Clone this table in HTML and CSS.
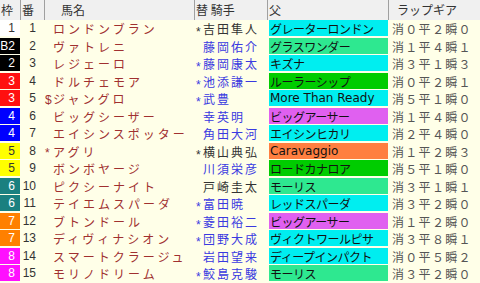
FILE: index.html
```html
<!DOCTYPE html>
<html lang="ja">
<head>
<meta charset="utf-8">
<link rel="stylesheet" href="styles.css">
</head>
<body>
<div class="board">
  <div class="hdr">
    <div class="h">枠</div>
    <div class="h">番</div>
    <div class="h h-name">馬名</div>
    <div class="h">替 騎手</div>
    <div class="h">父</div>
    <div class="h h-lap">ラップギア</div>
  </div>

  <div class="row"><div class="waku w1">1</div><div class="ban">1</div><div class="name"><span class="mk"></span>ロンドンブラン</div><div class="jockey k-black"><span class="ast">*</span>吉田隼人</div><div class="sire s-cyan">グレーターロンドン</div><div class="lap">消０平２瞬０</div></div>
  <div class="row"><div class="waku w2">B2</div><div class="ban">2</div><div class="name"><span class="mk"></span>ヴァトレニ</div><div class="jockey"><span class="ast"></span>藤岡佑介</div><div class="sire s-spring">グラスワンダー</div><div class="lap">消１平４瞬１</div></div>
  <div class="row"><div class="waku w2">2</div><div class="ban">3</div><div class="name"><span class="mk"></span>レジェーロ</div><div class="jockey"><span class="ast">*</span>藤岡康太</div><div class="sire s-cyan">キズナ</div><div class="lap">消３平１瞬３</div></div>
  <div class="row"><div class="waku w3">3</div><div class="ban">4</div><div class="name"><span class="mk"></span>ドルチェモア</div><div class="jockey"><span class="ast">*</span>池添謙一</div><div class="sire s-green">ルーラーシップ</div><div class="lap">消０平２瞬１</div></div>
  <div class="row"><div class="waku w3">3</div><div class="ban">5</div><div class="name"><span class="mk">$</span>ジャングロ</div><div class="jockey"><span class="ast">*</span>武豊</div><div class="sire s-cyan latin">More Than Ready</div><div class="lap">消５平１瞬０</div></div>
  <div class="row"><div class="waku w4">4</div><div class="ban">6</div><div class="name"><span class="mk"></span>ビッグシーザー</div><div class="jockey"><span class="ast"></span>幸英明</div><div class="sire s-violet">ビッグアーサー</div><div class="lap">消１平４瞬０</div></div>
  <div class="row"><div class="waku w4">4</div><div class="ban">7</div><div class="name"><span class="mk"></span>エイシンスポッター</div><div class="jockey"><span class="ast"></span>角田大河</div><div class="sire s-cyan">エイシンヒカリ</div><div class="lap">消２平４瞬０</div></div>
  <div class="row"><div class="waku w5">5</div><div class="ban">8</div><div class="name"><span class="mk">*</span>アグリ</div><div class="jockey k-black"><span class="ast">*</span>横山典弘</div><div class="sire s-orange latin">Caravaggio</div><div class="lap">消１平２瞬３</div></div>
  <div class="row"><div class="waku w5">5</div><div class="ban">9</div><div class="name"><span class="mk"></span>ボンボヤージ</div><div class="jockey"><span class="ast"></span>川須栄彦</div><div class="sire s-green">ロードカナロア</div><div class="lap">消５平１瞬０</div></div>
  <div class="row"><div class="waku w6">6</div><div class="ban">10</div><div class="name"><span class="mk"></span>ピクシーナイト</div><div class="jockey k-black"><span class="ast"></span>戸崎圭太</div><div class="sire s-spring">モーリス</div><div class="lap">消３平１瞬１</div></div>
  <div class="row"><div class="waku w6">6</div><div class="ban">11</div><div class="name"><span class="mk"></span>テイエムスパーダ</div><div class="jockey"><span class="ast">*</span>富田暁</div><div class="sire s-cyan">レッドスパーダ</div><div class="lap">消３平２瞬０</div></div>
  <div class="row"><div class="waku w7">7</div><div class="ban">12</div><div class="name"><span class="mk"></span>ブトンドール</div><div class="jockey"><span class="ast">*</span>菱田裕二</div><div class="sire s-violet">ビッグアーサー</div><div class="lap">消１平２瞬０</div></div>
  <div class="row"><div class="waku w7">7</div><div class="ban">13</div><div class="name"><span class="mk"></span>ディヴィナシオン</div><div class="jockey"><span class="ast">*</span>団野大成</div><div class="sire s-cyan">ヴィクトワールピサ</div><div class="lap">消３平８瞬１</div></div>
  <div class="row"><div class="waku w8">8</div><div class="ban">14</div><div class="name"><span class="mk"></span>スマートクラージュ</div><div class="jockey"><span class="ast"></span>岩田望来</div><div class="sire s-cyan">ディープインパクト</div><div class="lap">消０平５瞬２</div></div>
  <div class="row"><div class="waku w8">8</div><div class="ban">15</div><div class="name"><span class="mk"></span>モリノドリーム</div><div class="jockey"><span class="ast">*</span>鮫島克駿</div><div class="sire s-spring">モーリス</div><div class="lap">消３平２瞬０</div></div>
</div>
</body>
</html>
```

FILE: styles.css
```css
html, body {
  margin: 0;
  padding: 0;
  background: #ffffe8;
}
body {
  width: 480px;
  height: 283px;
  overflow: hidden;
  font-family: "Noto Sans CJK JP", "Liberation Sans", sans-serif;
  font-size: 12px;
  color: #333;
}
.board {
  display: flex;
  flex-direction: column;
}
.hdr, .row {
  display: grid;
  grid-template-columns: 21px 24px 150px 73px 121px 91px;
}
.hdr {
  height: 20px;
  background: #f0f0f0;
}
.h {
  line-height: 19px;
  padding-left: 1px;
  color: #333;
  border-right: 1px solid #a0a0a0;
  white-space: nowrap;
}
.h-name { padding-left: 16px; }
.h-lap { padding-left: 8px; border-right: 0; }

.row {
  height: 17.5px;
}
.row > div {
  height: 16px;
  line-height: 17px;
  white-space: nowrap;
}
.waku {
  margin-right: 1px;
  text-align: right;
  padding-right: 5px;
  font-family: "Liberation Sans", sans-serif;
  font-size: 12px;
  color: #fff;
}
.w1 { background: #ffffff; color: #333; }
.w2 { background: #000000; }
.w3 { background: #ff1010; }
.w4 { background: #0000ff; }
.w5 { background: #ffff00; color: #333; }
.w6 { background: #1a8080; }
.w7 { background: #ff8000; }
.w8 { background: #ff10ff; }

.ban {
  text-align: right;
  padding-right: 9px;
  font-family: "Liberation Sans", sans-serif;
  font-size: 12px;
  color: #333;
}
.name {
  color: #a03030;
  letter-spacing: 3px;
}
.mk {
  display: inline-block;
  width: 8px;
  letter-spacing: 0;
  font-family: "Liberation Sans", sans-serif;
}
.jockey {
  padding-left: 1px;
  letter-spacing: 2px;
  color: #3a3ae0;
}
.k-black { color: #333; }
.ast {
  display: inline-block;
  width: 7px;
  font-family: "Liberation Sans", sans-serif;
  letter-spacing: 0;
  vertical-align: -2px;
}
.sire {
  margin: 0 1px;
  padding-left: 1px;
  color: #111;
  letter-spacing: -0.5px;
}
.sire.latin {
  font-family: "DejaVu Sans", sans-serif;
  font-size: 12px;
  letter-spacing: 0;
}
.s-cyan { background: #00eef0; }
.s-spring { background: #2ee890; }
.s-green { background: #00cc00; }
.s-violet { background: #e060f0; }
.s-orange { background: #ff7f40; }
.lap {
  padding-left: 3px;
  color: #555;
  letter-spacing: 1.3px;
}
```
